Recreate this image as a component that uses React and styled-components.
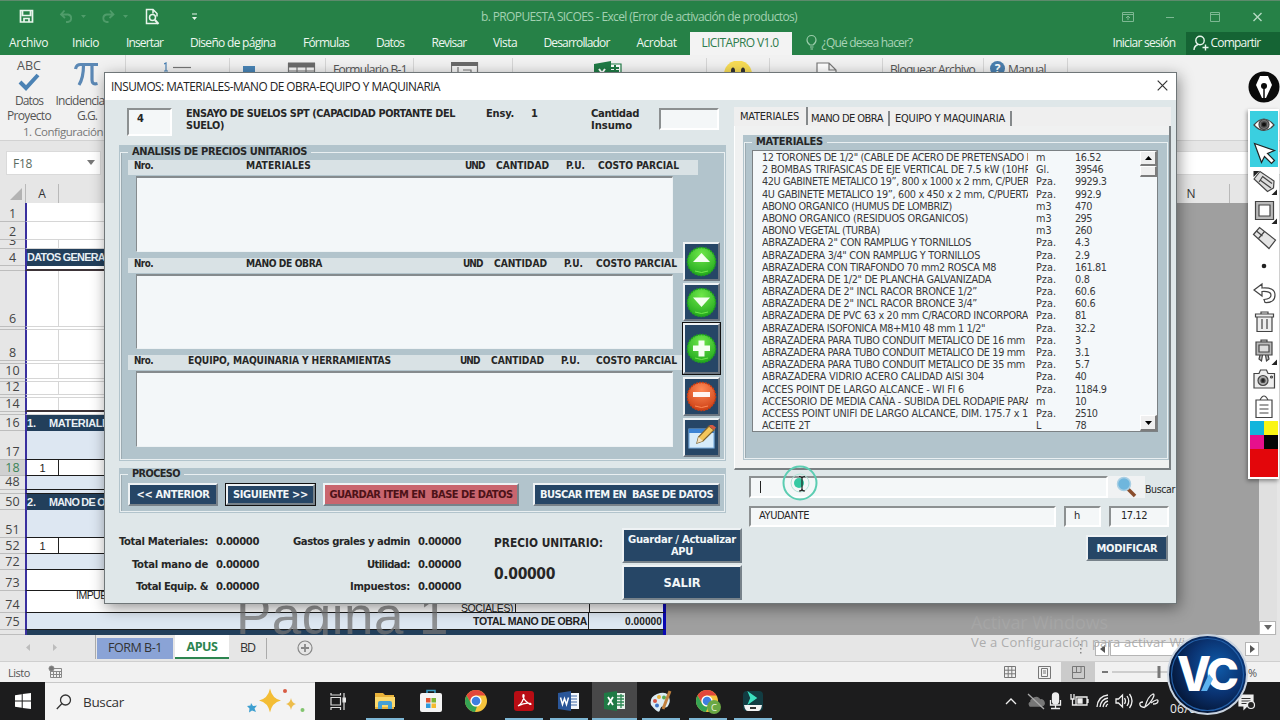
import React, { useLayoutEffect, useRef } from "react";
import styled, { createGlobalStyle, css } from "styled-components";

const GlobalStyle = createGlobalStyle`
  * { box-sizing: border-box; }
  body { margin: 0; overflow: hidden; }
`;

const SEGOE = `"Open Sans", "Noto Sans", sans-serif`;
const TAHOMA = `"DejaVu Sans Condensed", "DejaVu Sans", sans-serif`;
const ARIAL = `"Liberation Sans", Arial, sans-serif`;

/* ---------- text that tracks itself to a given width ---------- */
const TextSpan = styled.span`
  display: inline-block;
  width: max-content;
  white-space: pre;
  flex: none;
  font-size: ${(p) => (p.$s ? `${p.$s}px` : "inherit")};
  font-weight: ${(p) => (p.$b ? 700 : "inherit")};
  color: ${(p) => p.$c || "inherit"};
  margin-left: ${(p) => p.$ml || 0}px;
`;
function T({ w, s, b, c, ml, children }) {
  const ref = useRef(null);
  useLayoutEffect(() => {
    const el = ref.current;
    if (!w || !el) return;
    el.style.letterSpacing = "0px";
    const natural = el.getBoundingClientRect().width;
    el.style.letterSpacing = `${(w - natural) / el.textContent.length}px`;
  }, [w, children]);
  return (
    <TextSpan ref={ref} $s={s} $b={b} $c={c} $ml={ml}>
      {children}
    </TextSpan>
  );
}

const Screen = styled.div`
  position: relative;
  width: 1280px;
  height: 720px;
  overflow: hidden;
  display: flex;
  flex-direction: column;
  font-family: ${SEGOE};
  font-stretch: 88%;
  font-size: 12px;
  color: #333;
  background: #e6e6e6;
`;

/* ---------- Excel chrome ---------- */
const TitleBar = styled.header`
  height: 32px;
  flex: none;
  background: #268147;
  border-top: 1px solid #5d8a6c;
  display: flex;
  align-items: center;
  color: #a3d1b2;
`;
const Quick = styled.div`
  display: flex;
  align-items: center;
  width: 481px;
  padding-left: 19px;
`;
const WinButtons = styled.div`
  margin-left: 325px;
  display: flex;
  svg { display: block; }
`;
const MenuBar = styled.nav`
  height: 23px;
  flex: none;
  background: #268147;
  display: flex;
  color: #eef7f0;
  line-height: 22px;
`;
const ActiveTab = styled.div`
  width: 102px;
  margin-left: 13px;
  background: #f3f3f3;
  color: #2d7c4c;
  padding-left: 12px;
`;
const Hint = styled.div`
  display: flex;
  margin-left: 14px;
  width: 307px;
  color: #a9d3b6;
`;
const Share = styled.div`
  margin-left: 10px;
  flex: 1;
  background: #156434;
  display: flex;
  padding-left: 7px;
`;
const Ribbon = styled.div`
  height: 86px;
  flex: none;
  background: #f1f1f1;
  border-bottom: 1px solid #d2d2d2;
  display: flex;
  color: #555;
`;
const RibbonButtons = styled.div`
  display: flex;
`;
const RibbonButton = styled.div`
  display: flex;
  flex-direction: column;
  align-items: center;
  width: ${(p) => p.$w}px;
  line-height: 15px;
  padding-top: 3px;
`;
const RibbonGroup = styled.div`
  width: ${(p) => p.$w}px;
  height: 78px;
  margin-top: 3px;
  padding-top: 3px;
  padding-left: ${(p) => p.$pl || 0}px;
  border-right: 1px solid #d5d5d5;
  display: flex;
  flex: none;
`;
const FirstGroup = styled.div`
  width: 126px;
  height: 81px;
  border-right: 1px solid #d5d5d5;
  flex: none;
`;
const FormulaBar = styled.div`
  height: 43px;
  flex: none;
  background: #e6e6e6;
  padding: 10px 0 9px 6px;
  display: flex;
  gap: 18px;
`;
const NameBox = styled.div`
  width: 95px;
  background: #fff;
  border: 1px solid #dadada;
  display: flex;
  justify-content: space-between;
  align-items: center;
  padding: 0 5px 0 6px;
  color: #5b6b5f;
`;
const FormulaInput = styled.div`
  flex: 1;
  background: #fff;
  border: 1px solid #dadada;
  border-right: 0;
`;
const ColumnHeads = styled.div`
  height: 19px;
  flex: none;
  background: #e6e6e6;
  display: flex;
  line-height: 19px;
`;
const Corner = styled.div`
  width: 26px;
  border-right: 1px solid #b9b9b9;
  display: flex;
  align-items: flex-end;
  justify-content: flex-end;
  padding: 0 3px 3px 0;
`;
const ColHead = styled.div`
  width: ${(p) => p.$w}px;
  border-right: 1px solid #b9b9b9;
  text-align: center;
`;
const SheetArea = styled.div`
  height: 432px;
  flex: none;
  display: flex;
  background: #9f9f9f;
  justify-content: space-between;
`;
const Sheet = styled.div`
  position: relative;
  width: 666px;
  height: 432px;
  overflow: hidden;
`;
const SheetRow = styled.div`
  display: flex;
  height: ${(p) => p.$h}px;
`;
const RowHead = styled.div`
  width: 25px;
  flex: none;
  display: flex;
  align-items: flex-end;
  justify-content: center;
  line-height: 15px;
  font-size: 12.5px;
  overflow: hidden;
  border-bottom: 1px solid #bdbdbd;
  background: ${(p) => (p.$on ? "#d0d0d0" : "#e6e6e6")};
  color: ${(p) => (p.$on ? "#3c8458" : "#444")};
`;
const kinds = {
  plain: css`background: #fff; border-bottom: 1px solid #d6d6d6;`,
  line: css`background: #fff; border-bottom: 2px solid #3d3438;`,
  dark: css`background: #223f5b; color: #e9f0f5; font-weight: 700;`,
  blue: css`background: #dde7f2; border-bottom: 1px solid #1b1b1b;`,
  cell: css`background: #fff; border-bottom: 1px solid #1b1b1b;`,
};
const Cells = styled.div`
  flex: 1;
  display: flex;
  min-width: 0;
  border-left: 2px solid #3a309e;
  border-right: 3px solid #0a08b4;
  font-family: ${ARIAL};
  font-size: 11px;
  line-height: ${(p) => p.$lh || p.$h}px;
  white-space: pre;
  overflow: hidden;
  color: #222;
  ${(p) => kinds[p.$kind]}
`;
const Cell = styled.div`
  width: ${(p) => p.$w}px;
  flex: none;
  text-align: ${(p) => p.$a || "left"};
  border-right: ${(p) => (p.$edge ? `1px solid ${p.$edge}` : "0")};
  padding-left: ${(p) => p.$pl || 0}px;
  margin-top: ${(p) => p.$mt || 0}px;
`;
const PageMark = styled.div`
  position: absolute;
  left: 236px;
  top: 383px;
  font-family: ${ARIAL};
  font-size: 53px;
  line-height: 60px;
  color: rgba(115, 115, 115, 0.75);
  white-space: pre;
`;
const VScroll = styled.div`
  width: 21px;
  background: #e0e0e0;
  border-right: 3px solid #e6e6e6;
  display: flex;
  align-items: flex-end;
`;
const ScrollArrow = styled.div`
  width: ${(p) => p.$w}px;
  height: ${(p) => p.$h}px;
  background: #fff;
  border: 1px solid #b5b5b5;
  display: flex;
  align-items: center;
  justify-content: center;
`;
const SheetTabs = styled.div`
  height: 27px;
  flex: none;
  display: flex;
  align-items: flex-start;
  background: #e6e6e6;
  border-bottom: 1px solid #cfcfcf;
  line-height: 24px;
`;
const TabArrows = styled.div`
  width: 96px;
  height: 24px;
  border-right: 1px solid #ababab;
`;
const SheetTab = styled.div`
  height: ${(p) => (p.$on ? 24 : 21)}px;
  margin-top: ${(p) => (p.$on ? 0 : 3)}px;
  line-height: ${(p) => (p.$on ? 24 : 19)}px;
  width: ${(p) => p.$w}px;
  text-align: center;
  margin-left: ${(p) => p.$ml || 0}px;
  background: ${(p) => p.$bg || "transparent"};
  border-bottom: ${(p) => (p.$on ? "2px solid #2c8550" : "0")};
  border-right: ${(p) => (p.$sep ? "1px solid #ababab" : "0")};
`;
const HScroll = styled.div`
  display: flex;
  margin-left: 764px;
  margin-top: 7px;
  align-items: center;
`;
const Thumb = styled.div`
  width: 80px;
  height: 14px;
  background: #fff;
  border: 1px solid #b5b5b5;
  margin: 0 55px 0 1px;
`;
const StatusBar = styled.div`
  height: 20px;
  flex: none;
  background: #f1f1f1;
  display: flex;
  align-items: center;
  color: #555;
`;
const ViewButton = styled.div`
  width: 34px;
  height: 20px;
  display: flex;
  align-items: center;
  justify-content: center;
  background: ${(p) => (p.$on ? "#cbcbcb" : "transparent")};
`;
const ZoomTrack = styled.div`
  display: flex;
  align-items: center;
  width: 150px;
  padding-left: 7px;
`;

/* ---------- taskbar ---------- */
const Taskbar = styled.footer`
  height: 38px;
  flex: none;
  background: #1c1c1d;
  display: flex;
`;
const TaskItem = styled.div`
  width: ${(p) => p.$w}px;
  display: flex;
  align-items: center;
  justify-content: center;
  background: ${(p) => (p.$on ? "#484849" : "transparent")};
  svg { display: block; }
`;
const Running = styled.div`
  width: ${(p) => p.$w || 38}px;
  height: 38px;
  padding-top: 2px;
  display: flex;
  align-items: center;
  justify-content: center;
  border-bottom: 2px solid #7db6d4;
`;
const SearchBox = styled.div`
  width: 270px;
  background: #f3f3f3;
  border-top: 1px solid #c8c8c8;
  display: flex;
  align-items: center;
  padding-left: 11px;
  svg { flex: none; }
`;
const Tray = styled.div`
  margin-left: auto;
  width: 277px;
  display: flex;
  svg { display: block; }
`;
const Clock = styled.div`
  color: #eee;
  margin-left: 4px;
  padding-top: 20px;
  font-size: 12px;
  line-height: 14px;
  width: 68px;
`;

/* ---------- dialog ---------- */
const Dialog = styled.section`
  position: absolute;
  left: 104px;
  top: 72px;
  width: 1073px;
  height: 532px;
  background: #dfe7e9;
  outline: 1px solid #6f7678;
  outline-offset: -1px;
  box-shadow: 2px 4px 14px rgba(0, 0, 0, 0.42);
  font-family: ${TAHOMA};
  font-stretch: normal;
  font-size: 11px;
  color: #262626;
`;
const DialogTitle = styled.div`
  height: 28px;
  background: #fff;
  display: flex;
  justify-content: space-between;
  align-items: center;
  padding: 0 8px 2px 6px;
  font-family: ${SEGOE};
  font-stretch: 90%;
  border: 1px solid #6f7678;
  border-bottom: 0;
`;
const DialogBody = styled.div`
  display: flex;
`;
const LeftPane = styled.div`
  width: 630px;
  padding-left: 15px;
`;
const RightPane = styled.div`
  width: 442px;
  padding-top: 7px;
`;
const InfoRow = styled.div`
  height: 45px;
  display: flex;
  padding: 8px 0 0 8px;
  font-weight: 700;
  line-height: 12px;
`;
const InfoText = styled.div`
  width: ${(p) => p.$w}px;
  white-space: pre;
  display: flex;
  flex-direction: column;
  align-items: flex-start;
`;
const Field = styled.div`
  width: ${(p) => p.$w}px;
  height: ${(p) => p.$h}px;
  margin-right: ${(p) => p.$mr || 0}px;
  flex: none;
  background: #f4f7f8;
  border: 2px solid #fff;
  border-top-color: #8c9091;
  border-left-color: #8c9091;
  padding-left: ${(p) => p.$pl || 0}px;
  line-height: ${(p) => p.$lh || p.$h - 5}px;
`;
const Frame = styled.div`
  width: ${(p) => p.$w}px;
  height: ${(p) => p.$h}px;
  margin-bottom: ${(p) => p.$mb || 0}px;
  background: #b2c4cc;
  border: 1px solid #b2c4cc;
  border-top: 0;
  display: flex;
`;
const Group = styled.fieldset`
  flex: 1;
  min-width: 0;
  margin: 0;
  padding: 0;
  border: 1px solid #e9eff1;
  box-shadow: inset 1px 0 0 #9cabb2;
`;
const Legend = styled.legend`
  height: ${(p) => p.$h || 14}px;
  line-height: ${(p) => p.$h || 14}px;
  margin-left: 7px;
  padding: 0 4px;
  font-weight: 700;
`;
const GroupContent = styled.div`
  display: flex;
`;
const ListColumn = styled.div`
  width: 562px;
  flex: none;
  padding-top: 1px;
`;
const HeadStrip = styled.div`
  width: ${(p) => p.$w}px;
  height: 15px;
  margin-left: 7px;
  background: #d9e2e5;
  display: flex;
  line-height: 12px;
  font-weight: 700;
`;
const EmptyList = styled.div`
  width: 537px;
  height: 75.5px;
  margin: 1px 0 6px 15px;
  background: #f3f7f9;
  border: 1px solid #edf2f4;
  border-top: 2px solid #858b8e;
  border-left-color: #858b8e;
`;
const ToolColumn = styled.div`
  padding-top: 83px;
`;
const IconButton = styled.div`
  width: 37px;
  height: ${(p) => p.$h}px;
  margin-bottom: ${(p) => p.$mb}px;
  background: #264666;
  border: 2px solid #eef2f4;
  border-right-color: #6b7580;
  border-bottom-color: #6b7580;
  outline: ${(p) => (p.$focus ? "1px solid #111" : "none")};
  display: flex;
  align-items: center;
  justify-content: center;
  svg { flex: none; }
`;
const PushButton = styled.button`
  width: ${(p) => p.$w}px;
  height: ${(p) => p.$h}px;
  margin: ${(p) => p.$mt || 0}px ${(p) => p.$mr || 0}px ${(p) => p.$mb || 0}px 0;
  padding: 1px 0 0;
  flex: none;
  background: ${(p) => (p.$red ? "#c9656e" : "#264666")};
  color: ${(p) => (p.$red ? "#4d1218" : "#f2f6f8")};
  border: 2px solid #eef2f4;
  border-right-color: #77828a;
  border-bottom-color: #77828a;
  outline: ${(p) => (p.$focus ? "1px solid #111" : "none")};
  font: 700 11px/12px ${TAHOMA};
  display: flex;
  flex-direction: column;
  align-items: center;
  justify-content: center;
`;
const ProcessButtons = styled.div`
  display: flex;
  padding: 3px 0 0 7px;
`;
const Summary = styled.div`
  display: flex;
  align-items: flex-start;
  padding-top: 15px;
`;
const Totals = styled.div`
  display: grid;
  flex: none;
  grid-template-columns: ${(p) => p.$label}px 43px;
  grid-auto-rows: 22.5px;
  column-gap: 8px;
  margin: 3px ${(p) => p.$mr}px 0 0;
  font-weight: 700;
  line-height: 22px;
  justify-items: end;
`;
const UnitPrice = styled.div`
  width: 128px;
  flex: none;
  padding-top: 3px;
  font-weight: 700;
  line-height: 24px;
  display: flex;
  flex-direction: column;
  gap: 7px;
`;
const ActionColumn = styled.div`
  flex: none;
`;
const PageTabs = styled.div`
  display: flex;
  height: 19px;
  width: 437px;
  background: #efefef;
`;
const PageTab = styled.div`
  width: ${(p) => p.$w}px;
  padding-left: ${(p) => p.$pl}px;
  height: ${(p) => (p.$on ? 18 : 15)}px;
  margin-top: ${(p) => (p.$on ? 0 : 4)}px;
  line-height: ${(p) => (p.$on ? 19 : 15)}px;
  border-right: 2px solid #85898b;
`;
const Page = styled.div`
  width: 437px;
  height: 344px;
  background: #f0f1f1;
  border-right: 2px solid #7a8083;
  border-bottom: 2px solid #7a8083;
  border-left: 1px solid #fff;
  padding: 9px 0 0 8px;
`;
const MaterialList = styled.div`
  margin: 1px 0 0 7px;
  width: 406px;
  height: 282px;
  background: #f4f8fa;
  border: 1px solid #7b8184;
  display: flex;
  justify-content: space-between;
`;
const Rows = styled.div`
  padding: 1px 0 0 9px;
  width: 380px;
`;
const MaterialRow = styled.div`
  display: grid;
  grid-template-columns: 266px 31px 1fr;
  column-gap: 8px;
  height: 12.2px;
  line-height: 12.2px;
  font-size: 10.8px;
  color: #3a3a3a;
`;
const MaterialCell = styled.div`
  overflow-x: clip;
  overflow-y: visible;
`;
const ListScroll = styled.div`
  width: 17px;
  display: flex;
  flex-direction: column;
  background: #f4f8fa;
`;
const ScrollPart = styled.div`
  height: ${(p) => p.$h}px;
  background: #efefef;
  border: 1px solid #fff;
  border-right: 2px solid #7c7c7c;
  border-bottom: 2px solid #7c7c7c;
  margin-top: ${(p) => p.$mt || 0};
  display: flex;
  align-items: center;
  justify-content: center;
`;
const FormRow = styled.div`
  display: flex;
  padding-left: 15px;
  padding-right: ${(p) => p.$pr || 0}px;
  margin-top: ${(p) => p.$mt}px;
  justify-content: ${(p) => (p.$end ? "flex-end" : "flex-start")};
`;
const SearchIconBox = styled.div`
  width: 37px;
  height: 22px;
  background: #f0f2f3;
  display: flex;
  justify-content: center;
`;
const SearchLabel = styled.div`
  padding-top: 7px;
`;
const Caret = styled.span`
  display: inline-block;
  width: 1px;
  height: 12px;
  background: #222;
  vertical-align: middle;
`;
const ClickMark = styled.div`
  position: absolute;
  left: 782px;
  top: 465px;
`;

/* ---------- overlays ---------- */
const InkBar = styled.div`
  position: absolute;
  left: 1248px;
  top: 71px;
  width: 32px;
  svg { display: block; }
`;
const InkPanel = styled.div`
  width: 31px;
  margin-top: 6px;
  background: #fff;
  border: 1px solid #fff;
  border-width: 2px 1px;
  padding-left: 1px;
  box-shadow: -1px 2px 4px rgba(0, 0, 0, 0.4);
`;
const InkTool = styled.div`
  height: 28.2px;
  display: flex;
  align-items: center;
  justify-content: center;
  background: ${(p) => (p.$on ? "#3acfe0" : "#fff")};
`;
const Palette = styled.div`
  display: grid;
  grid-template-columns: 14px 14px;
  grid-template-rows: 14px 14px 28px;
`;
const Swatch = styled.div`
  background: ${(p) => p.$c};
  grid-column: ${(p) => (p.$wide ? "1 / 3" : "auto")};
`;
const Activation = styled.div`
  position: absolute;
  left: 971px;
  top: 610px;
  color: rgba(178, 178, 178, 0.4);
  line-height: 24px;
  display: flex;
  flex-direction: column;
`;
const ActivationNote = styled.div`
  line-height: 16px;
  color: rgba(165, 165, 165, 0.9);
`;
const LogoBadge = styled.div`
  position: absolute;
  left: 1167px;
  top: 634px;
`;

/* ---------- small drawings ---------- */
const Glyph = ({ w, h, children, vb, sw = 1.2, stroke = "none", fill = "none" }) => (
  <svg width={w} height={h} viewBox={vb || `0 0 ${w} ${h}`} fill={fill} stroke={stroke} strokeWidth={sw}>
    {children}
  </svg>
);

const QuickIcons = () => (
  <Glyph w={190} h={22} stroke="#e8f5ec" sw={1.5}>
    <path d="M1.5 4.500h12v11.500h-12zM3.500 5v4.500h8V5M5 16v-3.500h5V16" strokeWidth="1.700" />
    <g stroke="#4f9c6a" strokeWidth="1.800">
      <path d="M45.500 4.500l-3.500 4 4 3.500M42 8.500h7a3.800 3.800 0 0 1 0 7.500h-2" />
      <path d="M91 4.500l3.500 4-4 3.500M94.500 8.500h-7a3.800 3.800 0 0 0 0 7.500h2" />
    </g>
    <path d="M62 9h5l-2.500 3zM104 9h5l-2.500 3z" fill="#4f9c6a" stroke="none" />
    <path d="M138 17.500h-10.500v-14h6.500l4 4v3M134 3.500v4" />
    <circle cx="133.500" cy="11.500" r="3" />
    <path d="M136 14l3.500 4" strokeWidth="2" />
    <path d="M173 8h5" strokeWidth="1" />
    <path d="M173 11h5l-2.500 3z" fill="#e8f5ec" stroke="none" />
  </Glyph>
);

const RoundIcon = ({ color, kind }) => {
  const light = color === "green" ? "#6fe84a" : "#ff8a56";
  const dark = color === "green" ? "#1fa51c" : "#cb3d12";
  return (
    <Glyph w={31} h={31}>
      <defs>
        <radialGradient id={`g-${kind}`} cx="50%" cy="25%" r="80%">
          <stop offset="0" stopColor={light} />
          <stop offset="1" stopColor={dark} />
        </radialGradient>
      </defs>
      <circle cx="15.500" cy="15.500" r="14" fill={`url(#g-${kind})`} stroke={dark} strokeWidth="1.500" strokeDasharray="2 1" />
      <path d="M9 25q6.500 3 13 0" stroke={light} strokeWidth="1" />
      {kind === "up" && <path d="M7 16l8.500-9L24 16z" fill="#f4fff0" />}
      {kind === "down" && <path d="M7 10.500h17L15.500 20z" fill="#f4fff0" />}
      {kind === "plus" && <path d="M12.500 7.500h6v5h5.500v5.500h-5.500v5.500h-6V18H7v-5.500h5.500z" fill="#f4fff0" />}
      {kind === "minus" && <path d="M7 11h17v5H7z" fill="#fff6f2" />}
    </Glyph>
  );
};

const ChromeIcon = ({ badge }) => (
  <Glyph w={26} h={26}>
    <circle cx="12" cy="13" r="11" fill="#f5c33b" />
    <path d="M2.500 7.500A11 11 0 0 1 21.500 7.500H12a5.500 5.500 0 0 0-4.800 8.200z" fill="#e2473b" />
    <path d="M2.500 7.500l4.700 8.200A5.500 5.500 0 0 0 13 18.400L11 24A11 11 0 0 1 2.500 7.500z" fill="#35a353" />
    <circle cx="12" cy="13" r="5.600" fill="#fff" />
    <circle cx="12" cy="13" r="4.300" fill="#3f7fe0" />
    {badge && (
      <>
        <circle cx="19" cy="19" r="7" fill="#6aa744" />
        <text x="19" y="22.500" textAnchor="middle" fontSize="9.500" fill="#e8f4dd" fontFamily="Open Sans, sans-serif">C</text>
      </>
    )}
  </Glyph>
);

const MoreMark = () => <path d="M27 22.500v6h-6z" fill="#222" stroke="none" />;
const inkIcons = [
  <g key="eye"><path d="M4 14q10-12 20 0q-10 11-20 0z" fill="#fff" /><circle cx="14" cy="13.500" r="5" fill="#777" /><circle cx="14" cy="13.500" r="2.600" fill="#111" /></g>,
  <path key="cur" d="M4.500 4.500l20 7-7 3 7 7-3 3-7-7-3 6z" fill="#fff" stroke="#222" />,
  <g key="pen"><path d="M4 12l6-7.500 14 9.500-.5 7-6 3.500zM10 13l11 8M12.500 9.500l9.500 7M9 15l4-6" fill="#ddd" /><path d="M3.500 4h6l-6 6z" fill="#222" stroke="none" /><MoreMark /></g>,
  <g key="sq"><path d="M5.500 5.500h18v18h-18z" fill="#bbb" /><path d="M9 9h11v11H9z" fill="#fff" /><MoreMark /></g>,
  <g key="er"><path d="M3.500 10.500l6-7 16 12.500-6.500 8.500z" fill="#e4e4e4" /><path d="M8.500 14.500l6-7M6.500 7l6 5" /></g>,
  <circle key="dot" cx="14" cy="14" r="2.300" fill="#222" stroke="none" />,
  <path key="undo" d="M4 10l8-6v4q13-1 13 7t-10 7.500l-1-3q7-.5 7-4.500t-9-3.500v4.500z" fill="#fff" />,
  <g key="tr"><path d="M7 9h15v14.500H7zM5.500 6h18v3h-18zM11 6V4h7v2M12 11v10M17 11v10" fill="#eee" /></g>,
  <g key="bd"><path d="M6 5h16v13H6zM11 5V3h6v2M10 18l-1 4 2.500 2 1-6M18 18l1 4-2.500 2-1-6" fill="#bbb" /><path d="M9 8h10v7H9z" fill="#ddd" /><MoreMark /></g>,
  <g key="cam"><path d="M4 8.500h5l1.500-3.500h6L18 8.500h6.500v14.500H4z" fill="#eee" /><circle cx="13" cy="15.500" r="5" fill="#aaa" /><circle cx="13" cy="15.500" r="2" fill="#222" /><circle cx="21.500" cy="12" r="1" /></g>,
  <g key="clip"><path d="M6 7h16v17.500H6zM10 7q4-8 8 0zM9.500 12h9M9.500 16h9M9.500 20h9" fill="#fff" /></g>,
];

/* ---------- data ---------- */
const menuTabs = [
  ["Archivo", 9, 39], ["Inicio", 24, 27], ["Insertar", 27, 37], ["Diseño de página", 27, 85.5], ["Fórmulas", 27.5, 46],
  ["Datos", 27, 28], ["Revisar", 27.5, 35], ["Vista", 26.5, 24], ["Desarrollador", 26.5, 66], ["Acrobat", 27, 40],
];

const divider = <Cell key="a" $w={32} $edge="#d6d6d6" />;
const sheetRows = [
  ["1", 19, "plain"], ["2", 18, "plain"], ["3", 9, "plain", divider],
  ["4", 17, "dark", <T key="a" w={97} s={10.8}>DATOS GENERALES</T>],
  ["", 5, "line"],
  ["6", 56, "plain", divider], ["", 3, "plain"],
  ["8", 31, "plain", divider], ["", 3, "plain"],
  ["10", 15, "plain", divider], ["", 3, "plain"],
  ["12", 13, "plain", divider], ["", 3, "plain"],
  ["14", 14, "line", divider], ["", 3, "plain"],
  ["16", 16, "dark", <React.Fragment key="a"><Cell $w={22}>1.</Cell><T w={67}>MATERIALES</T></React.Fragment>],
  ["17", 29, "blue"],
  ["18", 16, "cell", <Cell key="a" $w={32} $a="center" $edge="#222">1</Cell>],
  ["48", 14, "blue"], ["", 4, "blue"],
  ["50", 16, "dark", <React.Fragment key="a"><Cell $w={22}>2.</Cell><T w={77} s={10.8}>MANO DE OBRA</T></React.Fragment>],
  ["51", 28, "blue"],
  ["52", 16, "cell", <Cell key="a" $w={32} $a="center" $edge="#222">1</Cell>],
  ["72", 16, "blue"], ["73", 21, "cell"],
  ["74", 22, "cell", (
    <React.Fragment key="a">
      <Cell $w={433} $pl={49} $mt={-7}><T w={57} s={10.5}>IMPUESTOS</T></Cell>
      <Cell $w={56} $pl={1} $mt={6} $edge="#222"><T w={52} s={10.5}>SOCIALES)</T></Cell>
      <Cell $w={74} $edge="#222" />
    </React.Fragment>
  )],
  ["75", 17, "blue", (
    <React.Fragment key="a">
      <Cell $w={562} $pl={446} $edge="#222"><T w={114} b s={10.5}>TOTAL MANO DE OBRA</T></Cell>
      <Cell $w={73} $pl={36}><T w={37} b s={10.2}>0.00000</T></Cell>
    </React.Fragment>
  )],
  ["", 5, "dark"],
];

const materials = [
  ['12 TORONES DE 1/2" (CABLE DE ACERO DE PRETENSADO P', 270, "m", "16.52"],
  ["2 BOMBAS TRIFASICAS DE EJE VERTICAL DE 7.5 kW (10HP", 268, "Gl.", "39546"],
  ["42U GABINETE METALICO 19”, 800 x 1000 x 2 mm, C/PUER", 267, "Pza.", "9929.3"],
  ["4U GABINETE METALICO 19”, 600 x 450 x 2 mm, C/PUERTA", 270, "Pza.", "992.9"],
  ["ABONO ORGANICO (HUMUS DE LOMBRIZ)", 190, "m3", "470"],
  ["ABONO ORGANICO (RESIDUOS ORGANICOS)", 206, "m3", "295"],
  ["ABONO VEGETAL (TURBA)", 118, "m3", "260"],
  ['ABRAZADERA 2" CON RAMPLUG Y TORNILLOS', 209, "Pza.", "4.3"],
  ['ABRAZADERA 3/4" CON RAMPLUG Y TORNILLOS', 218, "Pza.", "2.9"],
  ["ABRAZADERA CON TIRAFONDO 70 mm2 ROSCA M8", 234, "Pza.", "161.81"],
  ['ABRAZADERA DE 1/2" DE PLANCHA GALVANIZADA', 229, "Pza.", "0.8"],
  ["ABRAZADERA DE 2\" INCL RACOR BRONCE 1/2”", 215, "Pza.", "60.6"],
  ["ABRAZADERA DE 2\" INCL RACOR BRONCE 3/4”", 215, "Pza.", "60.6"],
  ["ABRAZADERA DE PVC 63 x 20 mm C/RACORD INCORPORA", 266, "Pza.", "81"],
  ['ABRAZADERA ISOFONICA M8+M10 48 mm 1 1/2"', 223, "Pza.", "32.2"],
  ["ABRAZADERA PARA TUBO CONDUIT METALICO DE 16 mm", 263, "Pza.", "3"],
  ["ABRAZADERA PARA TUBO CONDUIT METALICO DE 19 mm", 263, "Pza.", "3.1"],
  ["ABRAZADERA PARA TUBO CONDUIT METALICO DE 35 mm", 263, "Pza.", "5.7"],
  ["ABRAZADERA VIDRIO ACERO CALIDAD AISI 304", 222, "Pza.", "40"],
  ["ACCES POINT DE LARGO ALCANCE - WI FI 6", 202, "Pza.", "1184.9"],
  ["ACCESORIO DE MEDIA CAÑA - SUBIDA DEL RODAPIE PARA", 269, "m", "10"],
  ["ACCESS POINT UNIFI DE LARGO ALCANCE, DIM. 175.7 x 1", 266, "Pza.", "2510"],
  ["ACEITE 2T", 48, "L", "78"],
];

const listHeads = [
  { strip: 570, title: "MATERIALES", ml: 93, tw: 65, und: 465, gaps: [12, 17, 14] },
  { strip: 556, title: "MANO DE OBRA", ml: 93, tw: 76, und: 463, gaps: [12, 17, 14] },
  { strip: 556, title: "EQUIPO, MAQUINARIA Y HERRAMIENTAS", ml: 35, tw: 203, und: 460, gaps: [12, 17, 17] },
];

const ListHead = ({ strip, title, ml, tw, und, gaps }) => (
  <HeadStrip $w={strip}>
    <T w={19} s={9.8} ml={6}>Nro.</T>
    <T w={tw} s={10.2} ml={ml}>{title}</T>
    <T w={19.5} s={10} ml={und - (153 + ml + tw)}>UND</T>
    <T w={53} s={10.2} ml={gaps[0] - 0.5}>CANTIDAD</T>
    <T w={19} s={10} ml={gaps[1]}>P.U.</T>
    <T w={81} s={10.2} ml={gaps[2] - 1}>COSTO PARCIAL</T>
  </HeadStrip>
);

/* ---------- sections ---------- */
const ExcelTop = () => (
  <>
    <TitleBar>
      <Quick><QuickIcons /></Quick>
      <T w={316}>b. PROPUESTA SICOES - Excel (Error de activación de productos)</T>
      <WinButtons>
        <Glyph w={150} h={16} stroke="#7db893" sw={1}>
          <path d="M.5 3.500h11v9H.5zM.5 5.500h11M6 11V7M4 9l2-2 2 2M44 8.500h8M88.500 3.500h9v9h-9zM88.500 5.500h9" />
          <path d="M131.500 4l8 8M139.500 4l-8 8" stroke="#b5dbc2" strokeWidth="1.400" />
        </Glyph>
      </WinButtons>
    </TitleBar>
    <MenuBar>
      {menuTabs.map(([name, ml, w]) => <T key={name} w={w} ml={ml}>{name}</T>)}
      <ActiveTab><T w={77}>LICITAPRO V1.0</T></ActiveTab>
      <Hint>
        <Glyph w={16} h={22} stroke="#9accaa">
          <path d="M4 13q-3-2-3-5a4.300 4.300 0 0 1 9 0q0 3-3 5zM4 15h3.500M4.500 17h2.500" />
        </Glyph>
        <T w={91}>¿Qué desea hacer?</T>
      </Hint>
      <T w={63}>Iniciar sesión</T>
      <Share>
        <Glyph w={18} h={22} stroke="#e8f5ec" sw={1.4}>
          <circle cx="7" cy="8.500" r="4.200" /><path d="M1 18q0-4 4-5.500M9.500 15.500h6M12.500 12.500v6" />
        </Glyph>
        <T w={50}>Compartir</T>
      </Share>
    </MenuBar>
    <Ribbon>
      <FirstGroup>
        <RibbonButtons>
          <RibbonButton $w={58}>
            <T w={24} s={12.5}>ABC</T>
            <Glyph w={24} h={20} stroke="#4b82b4" sw={4}><path d="M3 9l6 6L21 2" /></Glyph>
            <T w={28}>Datos</T>
            <T w={44}>Proyecto</T>
          </RibbonButton>
          <RibbonButton $w={58}>
            <Glyph w={26} h={35} stroke="#5b88b5" sw={3.2}>
              <path d="M1.500 11q1-4.500 5-4.500h17.500M9.500 7q0 13-4.500 20M18 7v15q0 5 5.500 3.500" />
            </Glyph>
            <T w={49} ml={-14}>Incidencia</T>
            <T w={20}>G.G.</T>
          </RibbonButton>
        </RibbonButtons>
        <T w={80} s={11.5} ml={23} c="#777">1. Configuración</T>
      </FirstGroup>
      <RibbonGroup $w={104} $pl={38}><Glyph w={30} h={16} stroke="#777"><path d="M9 6.500h18" /><path d="M0 3l2-1v8M0 10h4" stroke="#4b82b4" /></Glyph></RibbonGroup>
      <RibbonGroup $w={96} $pl={13}><Glyph w={80} h={20}><path d="M0 5h12v9H0z" fill="#4884b6" /><path d="M45.500 2.500h26v14h-26zM45.500 10h26M54 6v10M63 6v10" fill="#f5f5f5" stroke="#777" /><path d="M45 1.500h27v5H45z" fill="#6a6a6a" /></Glyph></RibbonGroup>
      <RibbonGroup $w={88} $pl={7}><T w={74}>Formulario B-1</T></RibbonGroup>
      <RibbonGroup $w={99} $pl={37}><Glyph w={28} h={20}><path d="M.5 1.500h26v15H.5zM7 6v9M12 9h8v6" fill="#f5f5f5" stroke="#777" /><path d="M0 1h27v4H0z" fill="#6a6a6a" /></Glyph></RibbonGroup>
      <RibbonGroup $w={194} $pl={81}><Glyph w={29} h={20}><path d="M12 3h15v14H12z" fill="#fff" stroke="#1f7a45" /><path d="M16 7h9M16 10h9M21 4v12" stroke="#1f7a45" strokeWidth="2" /><path d="M0 3l17-3v20H0z" fill="#1f7a45" /><path d="M5 8l6 8M11 8l-6 8" stroke="#fff" strokeWidth="2" /></Glyph></RibbonGroup>
      <RibbonGroup $w={63} $pl={17}><Glyph w={30} h={26}><circle cx="14" cy="13.500" r="14" fill="#f7dc55" /><ellipse cx="9" cy="10" rx="2" ry="3.500" fill="#333" /><ellipse cx="19" cy="10" rx="2" ry="3.500" fill="#333" /></Glyph></RibbonGroup>
      <RibbonGroup $w={113} $pl={46}><Glyph w={22} h={20} stroke="#777" fill="#fff"><path d="M1 2h12l7 7v12H1zM13 2v7h7" /></Glyph></RibbonGroup>
      <RibbonGroup $w={101} $pl={7}><T w={85}>Bloquear Archivo</T></RibbonGroup>
      <RibbonGroup $w={84} $pl={6}>
        <Glyph w={18} h={18}><circle cx="7.500" cy="7.500" r="7.500" fill="#4a7fae" /><text x="7.500" y="12" textAnchor="middle" fontSize="12" fontWeight="700" fill="#fff">?</text></Glyph>
        <T w={38}>Manual</T>
      </RibbonGroup>
    </Ribbon>
    <FormulaBar>
      <NameBox><T w={19}>F18</T><Glyph w={8} h={6} fill="#777"><path d="M0 0h8L4 5z" /></Glyph></NameBox>
      <FormulaInput />
    </FormulaBar>
    <ColumnHeads>
      <Corner><Glyph w={12} h={12} fill="#b3b3b3"><path d="M12 0v12H0z" /></Glyph></Corner>
      <ColHead $w={33}>A</ColHead>
      <ColHead $w={1094} />
      <ColHead $w={77}>N</ColHead>
    </ColumnHeads>
  </>
);

const Workbook = () => (
  <SheetArea>
    <Sheet>
      {sheetRows.map(([n, h, kind, content], i) => (
        <SheetRow key={i} $h={h}>
          <RowHead $on={n === "18"}>{n}</RowHead>
          <Cells $kind={kind} $h={h}>{content}</Cells>
        </SheetRow>
      ))}
      <PageMark><T w={213}>Página 1</T></PageMark>
    </Sheet>
    <VScroll><ScrollArrow $w={17} $h={14}><Glyph w={8} h={6} fill="#666"><path d="M0 0h8L4 5z" /></Glyph></ScrollArrow></VScroll>
  </SheetArea>
);

const ExcelBottom = () => (
  <>
    <SheetTabs>
      <TabArrows><Glyph w={64} h={24} fill="#bdbdbd"><path d="M30 9v7l-4-3.500zM53 9v7l4-3.500z" /></Glyph></TabArrows>
      <SheetTab $w={76} $ml={1} $bg="#8aa3d6"><T w={54} s={12.5}>FORM B-1</T></SheetTab>
      <SheetTab $w={54} $ml={2} $bg="#fff" $on><T w={31} s={12.5} b c="#2c8550">APUS</T></SheetTab>
      <SheetTab $w={38} $sep><T w={15} s={12.5}>BD</T></SheetTab>
      <Glyph w={48} h={26} stroke="#888"><circle cx="38" cy="13" r="7" /><path d="M34 13h8M38 9v8" strokeWidth="1.800" /></Glyph>
      <HScroll>
        <Glyph w={16} h={12} fill="#888"><path d="M1 1h1.500v1.500H1zM1 5h1.500v1.500H1zM1 9h1.500v1.500H1z" /></Glyph>
        <ScrollArrow $w={14} $h={14}><Glyph w={5} h={8} fill="#555"><path d="M5 0v8L0 4z" /></Glyph></ScrollArrow>
        <Thumb />
        <ScrollArrow $w={14} $h={14}><Glyph w={5} h={8} fill="#555"><path d="M0 0v8l5-4z" /></Glyph></ScrollArrow>
      </HScroll>
    </SheetTabs>
    <StatusBar>
      <T w={22} s={11} ml={8}>Listo</T>
      <Glyph w={963} h={14} stroke="#888" sw={1}><path d="M20.500 3.500h11v9h-11zM20.500 6.500h11M23.500 6v6M26.500 6v6M29.500 6v6M20.500 9.500h11" /><circle cx="21.500" cy="3.500" r="2.500" fill="#777" /></Glyph>
      <ViewButton><Glyph w={13} h={13} stroke="#777" sw={1}><path d="M.5.5h11v11H.5zM4.200.5v11M7.800.5v11M.5 4.200h11M.5 7.800h11" /></Glyph></ViewButton>
      <ViewButton><Glyph w={13} h={13} stroke="#777" sw={1}><path d="M.5.5h12v12H.5zM3.500 2.500h6v8h-6zM5 5h3M5 7h3" /></Glyph></ViewButton>
      <ViewButton $on><Glyph w={13} h={13} stroke="#777" sw={1}><path d="M.5.5h12v12H.5zM4.500.5v6h4.500v-6M.5 6.500h8" /></Glyph></ViewButton>
      <ZoomTrack><Glyph w={140} h={14} stroke="#777"><path d="M0 7h6" strokeWidth="2" /><path d="M10 7h100" stroke="#aaa" /><path d="M57 1v12" strokeWidth="3" /></Glyph></ZoomTrack>
      <T s={11} ml={3}>%</T>
    </StatusBar>
  </>
);

const WindowsBar = () => (
  <Taskbar>
    <TaskItem $w={45}><Glyph w={16} h={16} fill="#fff"><path d="M0 2.200l6.700-1v6.400H0zM7.700 1L16 0v7.600H7.700zM0 8.500h6.700v6.300l-6.700-1zM7.700 8.500H16V16l-8.300-1z" /></Glyph></TaskItem>
    <SearchBox>
      <Glyph w={16} h={16} stroke="#333" sw={1.3}><circle cx="9.500" cy="6" r="5" /><path d="M6 9.500L.8 15" /></Glyph>
      <T w={41} s={13.5} ml={11}>Buscar</T>
      <Glyph w={190} h={34}>
        <path d="M146 3.500q2 10 11 12-9 2-11 12-2-10-11-12 9-2 11-12z" fill="#f3bd35" />
        <path d="M167 13q.8 5 5 6-4.200 1-5 6-.8-5-5-6 4.200-1 5-6z" fill="#edbd4b" />
        <path d="M127 18l2 3 4-.5-2.500 3 1.500 3.500-4-1.500-3 2 .5-4-2.500-2.500 3.500-.5z" fill="#3d9fd0" />
        <circle cx="161" cy="6" r="2" fill="#d85b43" /><circle cx="178.500" cy="25" r="2" fill="#82c46e" />
      </Glyph>
    </SearchBox>
    <TaskItem $w={44}><Glyph w={17} h={17} stroke="#ddd"><path d="M2 4.500h9.500v7.500H2zM2 0v2.500M11.500 0v2.500M2 2h9.500M2 14.500h9.500M2 14v3M11.500 14v3M15 0v17" /><path d="M14 5h3v4h-3z" fill="#eee" /></Glyph></TaskItem>
    <TaskItem $w={51}><Running><Glyph w={22} h={20}><path d="M1 2h8l2 2h9v14H1z" fill="#e9b23a" /><path d="M1 6h20v10H1z" fill="#fbd86b" /><path d="M4 18v-6q0-2 2-2h10q2 0 2 2v6h-4v-4H8v4z" fill="#459fd6" /></Glyph></Running></TaskItem>
    <TaskItem $w={42}><Glyph w={24} h={24}><path d="M8 5V1.500h8V5" stroke="#3aa0c8" strokeWidth="1.500" /><rect x="1" y="4" width="22" height="19" rx="2" fill="#f4f4f4" /><path d="M7 9h4.500v4.500H7z" fill="#e25432" /><path d="M12.500 9H17v4.500h-4.500z" fill="#7cb535" /><path d="M7 14.500h4.500V19H7z" fill="#2d9bdc" /><path d="M12.500 14.500H17V19h-4.500z" fill="#f5bb30" /></Glyph></TaskItem>
    <TaskItem $w={49}><ChromeIcon /></TaskItem>
    <TaskItem $w={45}><Running><Glyph w={20} h={20}><rect width="20" height="20" rx="3" fill="#b80d14" /><path d="M4 15q5-3 6-10 0-2-1-1-1 4 6.500 9 2 1 1-.5-5-1.500-12.500 2.500z" stroke="#fff" strokeWidth="1.400" /></Glyph></Running></TaskItem>
    <TaskItem $w={46}><Running><Glyph w={22} h={20}><path d="M11 2h10v16H11z" fill="#f3f6fa" /><path d="M13 5h6M13 8h6M13 11h6M13 14h6" stroke="#7d99c4" strokeWidth="1.300" /><path d="M0 2l13-2v20L0 18z" fill="#2a5699" /><path d="M2.500 6.500l2 7 2-6 2 6 2-7" stroke="#fff" strokeWidth="1.500" /></Glyph></Running></TaskItem>
    <TaskItem $w={45} $on><Running $w={45}><Glyph w={22} h={20}><path d="M11 2h10v16H11z" fill="#e9f2ec" /><path d="M13 5h7M13 8h7M13 11h7M13 14h7M17 3v14" stroke="#2d8753" strokeWidth="1.300" /><path d="M0 2l13-2v20L0 18z" fill="#1f7a45" /><path d="M4 6l5 8M9 6l-5 8" stroke="#fff" strokeWidth="1.800" /></Glyph></Running></TaskItem>
    <TaskItem $w={47}><Running><Glyph w={24} h={22}><path d="M2 15q-2-8 6-11t11 1 1 9-5 3-4 3-9-5z" fill="#dcecf4" /><circle cx="6" cy="11" r="2" fill="#d95745" /><circle cx="10" cy="7" r="2" fill="#e9b43e" /><circle cx="15" cy="7.500" r="2" fill="#58aa54" /><circle cx="8" cy="15.500" r="2" fill="#3f75c7" /><path d="M21 1l-7 18" stroke="#c1813f" strokeWidth="3" /></Glyph></Running></TaskItem>
    <TaskItem $w={47}><Running><ChromeIcon badge /></Running></TaskItem>
    <TaskItem $w={43}><Running><Glyph w={20} h={21}><rect width="20" height="20" rx="4" fill="#123c42" /><path d="M6 2l7 5-7 5 2-5z" fill="#3de0c0" stroke="#3de0c0" strokeWidth="1.500" /><path d="M1 14h18q-1 6-4 6H5q-3 0-4-6z" fill="#f4f4f4" /><path d="M7 17h6" stroke="#333" strokeWidth="2" /></Glyph></Running></TaskItem>
    <Tray>
      <Glyph w={163} h={38} stroke="#eee" sw={1.3}>
        <path d="M3 22l5-5 5 5" />
        <path d="M27 24h12q3-1 2-4t-4-2q-2-4-6-2t-3 4q-3 1-1 4z" fill="#777" stroke="#777" /><path d="M25 12l16 15" stroke="#aaa" />
        <rect x="49.500" y="11" width="6" height="11" rx="3" fill="#eee" /><path d="M47.500 18v5h10v-5M52.500 23v3M48 26.500h9" />
        <path d="M73 15h11v8H73zM85 17v4M68 12v5h3v-5M69.500 17v6h3" /><path d="M75 17h4v4h-4z" fill="#eee" />
        <path d="M94 25q1-11 11-12M97 25q1-8 8-9M100 25q1-5 5-6M103 25q0-2 2-3" />
        <path d="M113 17h2.500l4-4v12l-4-4H113zM121.500 16q2 3 0 6M124 14q3.500 5 0 10M126.500 12q5 7 0 14" />
        <path d="M142 25q3-11 8-13 2 0 0 4-3 6-8 9zM148 21q7-5 7-2t-5 3M140 20q-4 0-3 3t5 2" />
      </Glyph>
      <Clock><T w={26} s={12}>06/0</T></Clock>
      <Glyph w={20} h={38} stroke="#eee"><path d="M1 13h14v11H9l-3 3v-3H1z" fill="#eee" /><path d="M3.500 16.500h9M3.500 19h9M3.500 21.500h5" stroke="#333" /><circle cx="13" cy="23" r="3.500" fill="#222" /></Glyph>
    </Tray>
  </Taskbar>
);

const InsumosDialog = () => (
  <Dialog>
    <DialogTitle>
      <T w={329} s={11.8} c="#222">INSUMOS: MATERIALES-MANO DE OBRA-EQUIPO Y MAQUINARIA</T>
      <Glyph w={11} h={11} stroke="#333"><path d="M.7.7l9.600 9.600M10.300.7L.7 10.300" /></Glyph>
    </DialogTitle>
    <DialogBody>
      <LeftPane>
        <InfoRow>
          <Field $w={45} $h={28} $pl={8} $lh={18} $mr={14}><T s={11}>4</T></Field>
          <InfoText $w={300}>
            <T w={269} s={10.8}>ENSAYO DE SUELOS SPT (CAPACIDAD PORTANTE DEL</T>
            <T w={38} s={10.8}>SUELO)</T>
          </InfoText>
          <InfoText $w={45}><T w={28} s={11}>Ensy.</T></InfoText>
          <InfoText $w={60}><T s={11}>1</T></InfoText>
          <InfoText $w={68}><T w={48} s={11.2}>Cantidad</T><T w={41} s={11.2}>Insumo</T></InfoText>
          <Field $w={60} $h={22} />
        </InfoRow>
        <Frame $w={607} $h={316} $mb={7}>
          <Group>
            <Legend><T w={175} s={11}>ANALISIS DE PRECIOS UNITARIOS</T></Legend>
            <GroupContent>
              <ListColumn>
                {listHeads.map((h) => (
                  <React.Fragment key={h.title}>
                    <ListHead {...h} />
                    <EmptyList />
                  </React.Fragment>
                ))}
              </ListColumn>
              <ToolColumn>
                <IconButton $h={39} $mb={2}><RoundIcon color="green" kind="up" /></IconButton>
                <IconButton $h={38} $mb={2}><RoundIcon color="green" kind="down" /></IconButton>
                <IconButton $h={51} $mb={3} $focus><RoundIcon color="green" kind="plus" /></IconButton>
                <IconButton $h={39} $mb={2}><RoundIcon color="red" kind="minus" /></IconButton>
                <IconButton $h={39} $mb={0}>
                  <Glyph w={30} h={26}>
                    <path d="M2 4h25v19H2z" fill="#d6ebfa" stroke="#7aaede" /><path d="M2 4h25v4H2z" fill="#3b83d4" />
                    <path d="M10 18l1.500-6L22 1l5 4L16 16z" fill="#f4c65a" stroke="#7c6330" /><path d="M22 1l5 4 2-2.500L24.500-1z" fill="#d55a43" /><path d="M10 18l1.500-6L16 16z" fill="#f4e2c0" />
                  </Glyph>
                </IconButton>
              </ToolColumn>
            </GroupContent>
          </Group>
        </Frame>
        <Frame $w={607} $h={45}>
          <Group>
            <Legend $h={12}><T w={48} s={10.8}>PROCESO</T></Legend>
            <ProcessButtons>
              <PushButton $w={90} $h={23} $mr={8}><T w={73}>{"<< ANTERIOR"}</T></PushButton>
              <PushButton $w={89} $h={21} $mt={1} $mr={8} $focus><T w={75}>{"SIGUIENTE >>"}</T></PushButton>
              <PushButton $w={196} $h={23} $mr={14} $red><T w={183}>GUARDAR ITEM EN  BASE DE DATOS</T></PushButton>
              <PushButton $w={187} $h={23}><T w={173}>BUSCAR ITEM EN  BASE DE DATOS</T></PushButton>
            </ProcessButtons>
          </Group>
        </Frame>
        <Summary>
          <Totals $label={89} $mr={34}>
            <T w={89} s={11.2}>Total Materiales:</T><T w={43} s={11.2}>0.00000</T>
            <T w={76} s={11.2}>Total mano de</T><T w={43} s={11.2}>0.00000</T>
            <T w={72} s={11.2}>Total Equip. &</T><T w={43} s={11.2}>0.00000</T>
          </Totals>
          <Totals $label={117} $mr={33}>
            <T w={117} s={11.2}>Gastos grales y admin</T><T w={43} s={11.2}>0.00000</T>
            <T w={43} s={11.2}>Utilidad:</T><T w={43} s={11.2}>0.00000</T>
            <T w={60} s={11.2}>Impuestos:</T><T w={43} s={11.2}>0.00000</T>
          </Totals>
          <UnitPrice>
            <T w={109} s={11.8}>PRECIO UNITARIO:</T>
            <T w={61} s={15.5}>0.00000</T>
          </UnitPrice>
          <ActionColumn>
            <PushButton $w={120} $h={35} $mb={2}><T w={108} s={11.2}>Guardar / Actualizar</T><T w={22}>APU</T></PushButton>
            <PushButton $w={120} $h={35}><T w={37} s={12.8}>SALIR</T></PushButton>
          </ActionColumn>
        </Summary>
      </LeftPane>
      <RightPane>
        <PageTabs>
          <PageTab $w={74} $pl={6} $on><T w={59}>MATERIALES</T></PageTab>
          <PageTab $w={82} $pl={3}><T w={72}>MANO DE OBRA</T></PageTab>
          <PageTab $w={122} $pl={5}><T w={110}>EQUIPO Y MAQUINARIA</T></PageTab>
        </PageTabs>
        <Page>
          <Frame $w={426} $h={325}>
            <Group>
              <Legend><T w={67} s={11}>MATERIALES</T></Legend>
              <MaterialList>
                <Rows>
                  {materials.map(([name, w, unit, price]) => (
                    <MaterialRow key={name}>
                      <MaterialCell><T w={w}>{name}</T></MaterialCell>
                      <MaterialCell><T w={unit === "Pza." ? 20 : undefined}>{unit}</T></MaterialCell>
                      <MaterialCell><T w={price.length * 5.6 - (price.includes(".") ? 2 : 0)}>{price}</T></MaterialCell>
                    </MaterialRow>
                  ))}
                </Rows>
                <ListScroll>
                  <ScrollPart $h={15}><Glyph w={7} h={4} fill="#000"><path d="M0 4h7L3.500 0z" /></Glyph></ScrollPart>
                  <ScrollPart $h={11} />
                  <ScrollPart $h={16} $mt="auto"><Glyph w={7} h={4} fill="#000"><path d="M0 0h7L3.500 4z" /></Glyph></ScrollPart>
                </ListScroll>
              </MaterialList>
            </Group>
          </Frame>
        </Page>
        <FormRow $mt={6}>
          <Field $w={359} $h={22} $pl={9}><Caret /></Field>
          <SearchIconBox>
            <Glyph w={24} h={22}><path d="M12 12l8 8" stroke="#8a4d2c" strokeWidth="3.500" /><circle cx="9" cy="8" r="6.500" fill="#6fb6dd" stroke="#a9cfe4" strokeWidth="1.500" /></Glyph>
          </SearchIconBox>
          <SearchLabel><T w={30} s={10.5}>Buscar</T></SearchLabel>
        </FormRow>
        <FormRow $mt={8}>
          <Field $w={307} $h={21} $pl={8} $mr={8}><T w={50}>AYUDANTE</T></Field>
          <Field $w={37} $h={21} $pl={8} $mr={8}><T>h</T></Field>
          <Field $w={60} $h={21} $pl={10}><T w={26}>17.12</T></Field>
        </FormRow>
        <FormRow $mt={8} $end $pr={8}>
          <PushButton $w={82} $h={26}><T w={61}>MODIFICAR</T></PushButton>
        </FormRow>
      </RightPane>
    </DialogBody>
  </Dialog>
);

const Logo = () => (
  <Glyph w={82} h={82}>
    <defs>
      <radialGradient id="badge" cx="62%" cy="40%" r="65%">
        <stop offset="0" stopColor="#0f5cab" /><stop offset=".55" stopColor="#0a3270" /><stop offset="1" stopColor="#04132f" />
      </radialGradient>
    </defs>
    <circle cx="40.500" cy="40.500" r="39.500" fill="url(#badge)" stroke="#c9d3df" strokeWidth="2" />
    <circle cx="40.500" cy="40.500" r="36" stroke="#2460a8" />
    <text x="10" y="57" fontFamily="Inter, Liberation Sans, sans-serif" fontWeight="800" fontSize="48" fill="#fff" textLength="34" lengthAdjust="spacingAndGlyphs">V</text>
    <text x="39" y="56" fontFamily="Inter, Liberation Sans, sans-serif" fontWeight="800" fontSize="44" fill="#fff" textLength="33" lengthAdjust="spacingAndGlyphs">C</text>
    <path d="M42 40l-8 17h6l6-12z" fill="#5eb3f0" />
  </Glyph>
);

export default function App() {
  return (
    <Screen>
      <GlobalStyle />
      <ExcelTop />
      <Workbook />
      <ExcelBottom />
      <WindowsBar />
      <Activation>
        <T w={137} s={18}>Activar Windows</T>
        <ActivationNote><T w={259} s={13}>Ve a Configuración para activar Windows.</T></ActivationNote>
      </Activation>
      <InsumosDialog />
      <ClickMark>
        <Glyph w={36} h={36}>
          <circle cx="18" cy="18" r="16.500" stroke="#5ccdb2" strokeWidth="2" />
          <circle cx="18" cy="18" r="9" stroke="#b3e3d8" strokeWidth="1" />
          <circle cx="17" cy="18" r="5" fill="#35c9a3" />
          <path d="M17 11.500q3 0 3 2 0-2 3-2M20 13v12M17 26q3 0 3-2 0 2 3 2" stroke="#222" strokeWidth="1.200" />
        </Glyph>
      </ClickMark>
      <InkBar>
        <Glyph w={32} h={32}>
          <circle cx="16" cy="16" r="15.500" fill="#0a0a0a" />
          <path d="M12 5h8l4 9-6 13h-4L8 14z" fill="#fff" /><circle cx="16" cy="15" r="3" fill="#0a0a0a" /><path d="M16 15v13" stroke="#0a0a0a" strokeWidth="1.500" />
        </Glyph>
        <InkPanel>
          {inkIcons.map((icon, i) => (
            <InkTool key={i} $on={i < 2}><Glyph w={28} h={28} stroke="#444">{icon}</Glyph></InkTool>
          ))}
          <Palette>
            <Swatch $c="#12b5dc" /><Swatch $c="#faf514" /><Swatch $c="#e6108c" /><Swatch $c="#050505" /><Swatch $c="#e3060b" $wide />
          </Palette>
        </InkPanel>
      </InkBar>
      <LogoBadge><Logo /></LogoBadge>
    </Screen>
  );
}
